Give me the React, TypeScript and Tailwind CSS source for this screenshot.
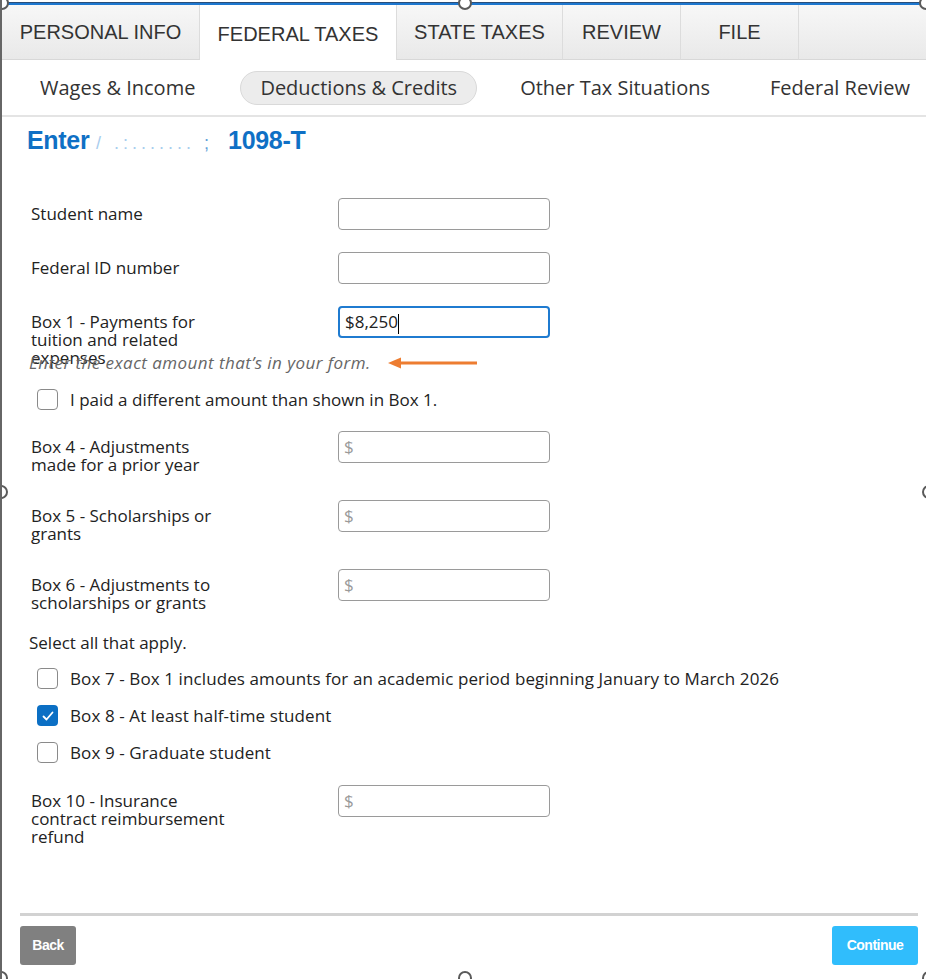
import React from "react";

const topTabs = [
  { label: "PERSONAL INFO", w: "w-[198px]" },
  { label: "FEDERAL TAXES", w: "w-[197px]", active: true },
  { label: "STATE TAXES", w: "w-[166px]" },
  { label: "REVIEW", w: "w-[118px]" },
  { label: "FILE", w: "w-[118px]" },
];

function Handle({ className }: { className: string }) {
  return (
    <div
      className={`absolute w-[14px] h-[14px] rounded-full bg-white border-2 border-[#5a5a5a] -translate-x-1/2 -translate-y-1/2 ${className}`}
    />
  );
}

function Checkbox({ checked = false }: { checked?: boolean }) {
  if (checked) {
    return (
      <div className="w-[21px] h-[21px] shrink-0 rounded-[4px] bg-[#0b6fc4] flex items-center justify-center">
        <svg width="14" height="14" viewBox="0 0 14 14" fill="none">
          <path d="M2.5 7.5l3 3 6-7" stroke="white" strokeWidth="1.8" strokeLinecap="round" strokeLinejoin="round" />
        </svg>
      </div>
    );
  }
  return <div className="w-[21px] h-[21px] shrink-0 rounded-[4px] border-[1.5px] border-[#8a8a8a] bg-white" />;
}

function AmountRow({ lines, mt, value, dollar = false, focused = false }: {
  lines: string[];
  mt: string;
  value?: string;
  dollar?: boolean;
  focused?: boolean;
}) {
  return (
    <div className={`flex items-start h-[32px] ${mt}`}>
      <div className="w-[309px] pl-[2px] pt-[7px] text-[17px] leading-[18px] text-[#222]">
        {lines.map((l) => (
          <div key={l} className="whitespace-nowrap">{l}</div>
        ))}
      </div>
      <div
        className={`w-[212px] h-[32px] rounded-[4px] bg-white flex items-center px-[5px] text-[17px] ${
          focused ? "border-2 border-[#1f7bd0]" : "border border-[#9a9a9a]"
        }`}
      >
        {value ? (
          <span className="text-[#222]">
            {value}
            <span className="inline-block w-[1px] h-[20px] bg-black align-middle" />
          </span>
        ) : dollar ? (
          <span className="text-[#9a9a9a]">$</span>
        ) : null}
      </div>
    </div>
  );
}

export default function App() {
  return (
    <div className="relative w-[926px] h-[979px] bg-white overflow-hidden border-l-2 border-[#666] font-['Open_Sans',sans-serif]">
      {/* selection frame top */}
      <div className="h-[2px]" />
      <div className="h-[3px] bg-[#1d77cf] border-t border-[#2a4f7a]" />

      {/* top tabs */}
      <div className="flex h-[55px] font-['Liberation_Sans',Arial,sans-serif] text-[20px] text-[#333]">
        {topTabs.map((t) => (
          <div
            key={t.label}
            className={`${t.w} flex items-center justify-center border-r border-[#dcdcdc] ${
              t.active ? "bg-white pt-[3px]" : "bg-gradient-to-b from-[#f7f7f7] to-[#e9e9e9] border-b border-b-[#d8d8d8]"
            }`}
          >
            {t.label}
          </div>
        ))}
        <div className="flex-1 bg-gradient-to-b from-[#f7f7f7] to-[#e9e9e9] border-b border-[#d8d8d8]" />
      </div>

      {/* sub nav */}
      <div className="flex items-center h-[57px] border-b-2 border-[#e4e4e4] text-[20px] text-[#333]">
        <div className="ml-[38px]">Wages &amp; Income</div>
        <div className="ml-[45px] h-[34px] px-[19px] flex items-center rounded-full bg-[#ececec] border border-[#d9d9d9]">
          Deductions &amp; Credits
        </div>
        <div className="ml-[43px]">Other Tax Situations</div>
        <div className="ml-[60px]">Federal Review</div>
      </div>

      {/* heading */}
      <div className="pl-[25px] mt-[8px] text-[25px] font-bold leading-[30px] text-[#0f70c5] font-['Liberation_Sans',Arial,sans-serif] tracking-[-0.3px]">
        Enter{" "}
        <span className="inline-block w-[132px] font-normal text-[18px] text-[#a9cdee] tracking-[4px]">
          / .:.......<span className="text-[#5f9fd8]"> ;</span>
        </span>
        1098-T
      </div>

      {/* form */}
      <div className="pl-[27px]">
        <AmountRow lines={["Student name"]} mt="mt-[40px]" />
        <AmountRow lines={["Federal ID number"]} mt="mt-[22px]" />
        <AmountRow lines={["Box 1 - Payments for", "tuition and related", "expenses"]} mt="mt-[22px]" value="$8,250" focused />

        <div className="flex items-center mt-[15px] h-[20px]">
          <span className="italic text-[17px] tracking-[0.45px] text-[#666]">Enter the exact amount that’s in your form.</span>
          <svg className="ml-[16px]" width="92" height="14" viewBox="0 0 92 14">
            <path d="M12 7H90" stroke="#ed7d31" strokeWidth="3" />
            <path d="M1 7L14 1.5V12.5Z" fill="#ed7d31" />
          </svg>
        </div>

        <div className="flex items-center gap-[12px] pl-[8px] mt-[16px] text-[17px] leading-[21px] text-[#222]">
          <Checkbox />
          <span>I paid a different amount than shown in Box 1.</span>
        </div>

        <AmountRow lines={["Box 4 - Adjustments", "made for a prior year"]} mt="mt-[21px]" dollar />
        <AmountRow lines={["Box 5 - Scholarships or", "grants"]} mt="mt-[37px]" dollar />
        <AmountRow lines={["Box 6 - Adjustments to", "scholarships or grants"]} mt="mt-[37px]" dollar />

        <div className="mt-[32px] text-[17px] leading-[20px] text-[#222]">Select all that apply.</div>

        <div className="flex flex-col gap-[16px] pl-[8px] mt-[15px] text-[17px] leading-[21px] tracking-[0.1px] text-[#222]">
          <div className="flex items-center gap-[12px]">
            <Checkbox />
            <span>Box 7 - Box 1 includes amounts for an academic period beginning January to March 2026</span>
          </div>
          <div className="flex items-center gap-[12px]">
            <Checkbox checked />
            <span>Box 8 - At least half-time student</span>
          </div>
          <div className="flex items-center gap-[12px]">
            <Checkbox />
            <span>Box 9 - Graduate student</span>
          </div>
        </div>

        <AmountRow lines={["Box 10 - Insurance", "contract reimbursement", "refund"]} mt="mt-[22px]" dollar />
      </div>

      {/* footer */}
      <div className="ml-[18px] mr-[8px] mt-[96px] h-[3px] bg-[#d2d2d2]" />
      <div className="flex justify-between ml-[18px] mr-[8px] mt-[10px] font-['Liberation_Sans',Arial,sans-serif]">
        <button className="w-[56px] h-[39px] rounded-[3px] bg-[#808080] text-white text-[14px] font-bold tracking-[-0.5px]">
          Back
        </button>
        <button className="w-[86px] h-[39px] rounded-[3px] bg-[#30bdfc] text-white text-[14px] font-bold tracking-[-0.5px]">
          Continue
        </button>
      </div>

      {/* selection handles */}
      <Handle className="left-[0px] top-[3px]" />
      <Handle className="left-[463px] top-[3px]" />
      <Handle className="left-[924px] top-[3px]" />
      <Handle className="left-[-1px] top-[492px]" />
      <Handle className="left-[927px] top-[492px]" />
      <Handle className="left-[-1px] top-[978px]" />
      <Handle className="left-[463px] top-[978px]" />
      <Handle className="left-[927px] top-[978px]" />
    </div>
  );
}
